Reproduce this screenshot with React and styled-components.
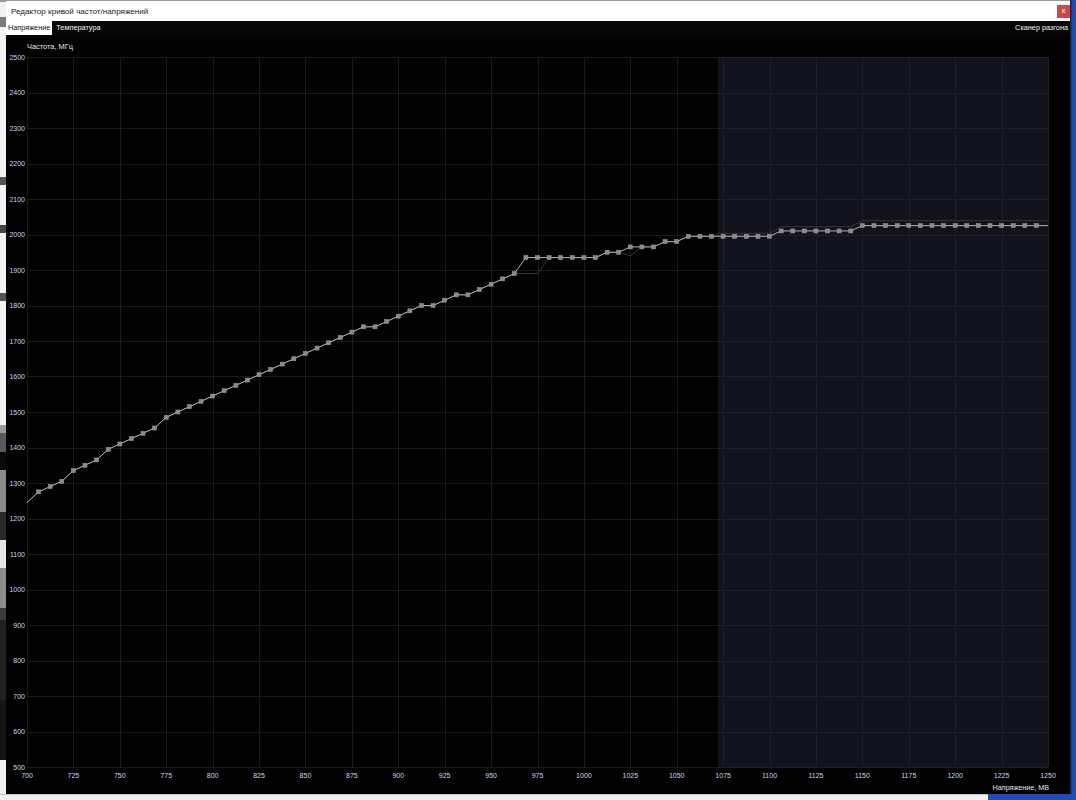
import React from 'react';
import styled, { createGlobalStyle } from 'styled-components';

const GlobalStyle = createGlobalStyle`
  html, body { margin: 0; padding: 0; background: #efefef; }
  body { font-family: "Liberation Sans", Arial, sans-serif; overflow: hidden; }
`;

const Desktop = styled.div`
  width: 1076px;
  height: 800px;
  display: flex;
  flex-direction: column;
  overflow: hidden;
`;

const Upper = styled.div`
  display: flex;
  height: 794px;
`;

const LeftStrip = styled.div`
  width: 6px;
  display: flex;
  flex-direction: column;
`;

const StripBlock = styled.div`
  height: ${(p) => p.$h}px;
  background: ${(p) => p.$c};
  flex: none;
`;

const RightStrip = styled.div`
  width: 6px;
  background: linear-gradient(90deg, #0a1e55 0%, #1b47a8 40%, #1f4fb6 100%);
`;

const BottomStrip = styled.div`
  display: flex;
  height: 6px;
`;

const BottomPart = styled.div`
  width: ${(p) => p.$w}px;
  flex: ${(p) => (p.$w ? 'none' : 1)};
  background: ${(p) => p.$c};
  border-top: 1px solid ${(p) => p.$b};
`;

const Window = styled.div`
  width: 1064px;
  display: flex;
  flex-direction: column;
  background: #000;
`;

const TitleBar = styled.div`
  height: 21px;
  box-sizing: border-box;
  background: #fff;
  border-top: 1px solid #9a9a9a;
  display: flex;
  align-items: center;
  justify-content: space-between;
  padding: 0 0 0 5px;
`;

const Title = styled.span`
  font-size: 8.1px;
  color: #1a1a1a;
`;

const CloseButton = styled.div`
  width: 13px;
  height: 13px;
  background: #c9484b;
  color: #fff;
  font-size: 8px;
  line-height: 12px;
  text-align: center;
`;

const TabBar = styled.div`
  height: 14px;
  background: #060606;
  display: flex;
  align-items: stretch;
  gap: 2px;
`;

const Tab = styled.div`
  padding: 0 2px;
  font-size: 7.3px;
  line-height: 14px;
  background: ${(p) => (p.$active ? '#ffffff' : 'transparent')};
  color: ${(p) => (p.$active ? '#111' : '#f4f4f4')};
  margin-left: ${(p) => (p.$push ? 'auto' : '0')};
`;

const ChartPane = styled.div`
  flex: 1;
  display: flex;
  background: #020202;
`;

const X0 = 27;
const X1 = 1048;
const Y0 = 57;
const Y1 = 767;
const xOf = (v) => X0 + ((v - 700) / 550) * (X1 - X0);
const yOf = (f) => Y1 - ((f - 500) / 2000) * (Y1 - Y0);

const rep = (v, n) => Array.from({ length: n }, () => v);
const FREQS = [
  1245, 1275, 1290, 1305, 1335, 1350, 1365, 1395, 1410, 1425, 1440, 1455, 1485, 1500, 1515,
  1530, 1545, 1560, 1575, 1590, 1605, 1620, 1635, 1650, 1665, 1680, 1695, 1710, 1725, 1740,
  1740, 1755, 1770, 1785, 1800, 1800, 1815, 1830, 1830, 1845, 1860, 1875, 1890,
  ...rep(1935, 7),
  ...rep(1950, 2),
  ...rep(1965, 3),
  ...rep(1980, 2),
  ...rep(1995, 8),
  ...rep(2010, 7),
  ...rep(2025, 17),
];

const POINTS = FREQS.map((f, i) => [xOf(700 + 6.25 * i), yOf(f)]);

const ghostFreqs = FREQS.slice(0, 60).map((f, i) => {
  if (i === 43 || i === 44) return 1890;
  if (i === 52) return 1940;
  return f;
});
const GHOST = [
  ...ghostFreqs.map((f, i) => [xOf(700 + 6.25 * i), yOf(f)]),
  [714, yOf(1995)],
  [719, 233.3],
  [770, 233.3],
  [781, 226.7],
  [850.6, 226.7],
  [862, 220.7],
  [1048, 220.7],
];

const toPath = (pts) => pts.map(([x, y]) => `${x.toFixed(2)},${y.toFixed(2)}`).join(' ');

const SHADE_X = 718;

const Chart = () => {
  const vLines = Array.from({ length: 23 }, (_, k) => 700 + k * 25);
  const hLines = Array.from({ length: 21 }, (_, k) => 500 + k * 100);
  return (
    <svg width="1064" height="759" viewBox="6 35 1064 759" style={{ display: 'block' }}>
      <rect x={SHADE_X} y={Y0} width={X1 - SHADE_X} height={Y1 - Y0} fill="#12121d" />
      <g shapeRendering="crispEdges">
        {vLines.map((v) => {
          const x = Math.round(xOf(v)) + 0.5;
          return (
            <line key={`v${v}`} x1={x} x2={x} y1={Y0} y2={Y1} stroke={x > SHADE_X ? '#1f1f2b' : '#1a1a1a'} strokeWidth="1" />
          );
        })}
        {hLines.map((f) => {
          const y = Math.round(yOf(f)) + 0.5;
          return (
            <g key={`h${f}`}>
              <line x1={X0} x2={SHADE_X} y1={y} y2={y} stroke="#1a1a1a" strokeWidth="1" />
              <line x1={SHADE_X} x2={X1} y1={y} y2={y} stroke="#1f1f2b" strokeWidth="1" />
            </g>
          );
        })}
      </g>
      <polyline points={toPath(GHOST)} fill="none" stroke="#36363c" strokeWidth="1" />
      <polyline points={toPath(POINTS)} fill="none" stroke="#b4b4b4" strokeWidth="1" />
      {POINTS.slice(1, 88).map(([x, y], i) => (
        <rect key={i} x={x - 2} y={y - 2} width="4" height="4" fill="#8a8a8a" stroke="#a4a4a4" strokeWidth="0.5" />
      ))}
      <g fontFamily='"Liberation Sans", Arial, sans-serif' fontSize="7" fill="#c9d5ea">
        {hLines.map((f) => (
          <text key={`yl${f}`} x="25" y={yOf(f) + 2.6} textAnchor="end">{f}</text>
        ))}
        {vLines.map((v) => (
          <text key={`xl${v}`} x={xOf(v)} y="777.6" textAnchor="middle">{v}</text>
        ))}
      </g>
      <text x="27" y="48.6" fontFamily='"Liberation Sans", Arial, sans-serif' fontSize="7.4" fill="#ece6dc">Частота, МГц</text>
      <text x="1049" y="789.6" textAnchor="end" fontFamily='"Liberation Sans", Arial, sans-serif' fontSize="7.2" fill="#e2e6ee">Напряжение, МВ</text>
    </svg>
  );
};

const LEFT_BLOCKS = [
  [2, '#9c9c9c'], [15, '#f2f2f2'], [10, '#7a7a7a'], [150, '#f3f3f3'], [8, '#555'], [40, '#f3f3f3'],
  [8, '#444'], [60, '#f3f3f3'], [8, '#555'], [124, '#f3f3f3'], [8, '#9a9a9a'], [19, '#5a5a5a'],
  [18, '#0a0a0a'], [42, '#8a8a8a'], [28, '#2a2a2a'], [28, '#e6e6e6'], [40, '#8c8c8c'],
  [12, '#3a3a3a'], [80, '#202020'], [60, '#151515'], [34, '#f0f0f0'],
];

export default function App() {
  return (
    <>
      <GlobalStyle />
      <Desktop>
        <Upper>
          <LeftStrip>
            {LEFT_BLOCKS.map(([h, c], i) => (
              <StripBlock key={i} $h={h} $c={c} />
            ))}
          </LeftStrip>
          <Window>
            <TitleBar>
              <Title>Редактор кривой частот/напряжений</Title>
              <CloseButton>x</CloseButton>
            </TitleBar>
            <TabBar>
              <Tab $active>Напряжение</Tab>
              <Tab>Температура</Tab>
              <Tab $push>Сканер разгона</Tab>
            </TabBar>
            <ChartPane>
              <Chart />
            </ChartPane>
          </Window>
          <RightStrip />
        </Upper>
        <BottomStrip>
          <BottomPart $w={988} $c="#f0f0f0" $b="#c4c4c4" />
          <BottomPart $c="#1f4fb6" $b="#1f4fb6" />
        </BottomStrip>
      </Desktop>
    </>
  );
}
